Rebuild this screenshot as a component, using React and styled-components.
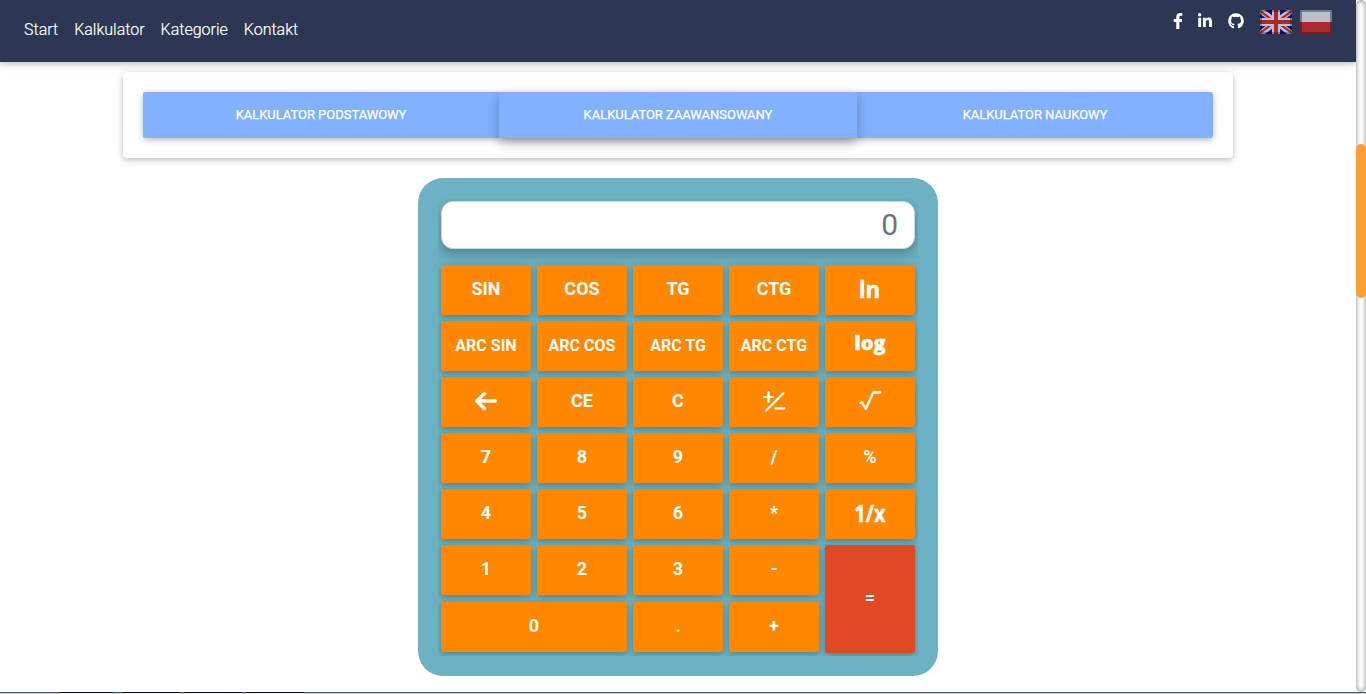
import React from "react";
import styled, { createGlobalStyle, css } from "styled-components";
import { FaFacebookF, FaLinkedinIn, FaGithub } from "react-icons/fa";

const GlobalStyle = createGlobalStyle`
  *, *::before, *::after { box-sizing: border-box; }
  body {
    margin: 0;
    background: #fff;
    font-family: Roboto, "Liberation Sans", sans-serif;
    font-size: 16px;
    overflow: hidden;
  }
`;

const Screen = styled.div`
  display: flex;
  flex-direction: column;
  width: 1366px;
  height: 694px;
  overflow: hidden;
`;

const Viewport = styled.div`
  display: flex;
  height: 692px;
`;

const Page = styled.div`
  width: 1356px;
  height: 692px;
  overflow: hidden;
`;

const Navbar = styled.nav`
  position: relative;
  z-index: 1;
  display: flex;
  justify-content: space-between;
  align-items: flex-start;
  height: 62px;
  padding: 0 24px 0 16px;
  background: #2d3753;
  box-shadow: 0 2px 5px 0 rgba(0, 0, 0, 0.16), 0 2px 10px 0 rgba(0, 0, 0, 0.12);
`;

const NavLinks = styled.div`
  display: flex;
  padding-top: 18px;
`;

const NavLink = styled.a`
  padding: 0 8px;
  color: #fff;
  font-weight: 300;
  line-height: 24px;
  -webkit-text-stroke: 0.2px #fff;
`;

const NavTools = styled.div`
  display: flex;
  align-items: flex-start;
  padding-top: 10px;
`;

const Social = styled.a`
  display: flex;
  margin-right: ${(p) => p.$gap}px;
  padding-top: 3px;
  color: #fff;
`;

const Flag = styled.svg`
  display: block;
  width: 32px;
  height: 24px;
  margin-left: ${(p) => p.$offset || 0}px;
`;

const TabCard = styled.section`
  width: 1110px;
  height: 86px;
  margin: 10px auto 0;
  padding: 20px;
  border-radius: 4px;
  background: #fff;
  box-shadow: 0 2px 5px 0 rgba(0, 0, 0, 0.16), 0 2px 10px 0 rgba(0, 0, 0, 0.12);
`;

const TabGroup = styled.div`
  display: grid;
  grid-template-columns: 356px 358px 356px;
  height: 46px;
  border-radius: 2px;
  box-shadow: 0 2px 5px 0 rgba(0, 0, 0, 0.16), 0 2px 10px 0 rgba(0, 0, 0, 0.12);
`;

const Tab = styled.button`
  border: 0;
  border-radius: ${(p) => p.$radius || 0};
  padding: 0 0 1px;
  background: #82b1ff;
  color: #fff;
  font: 400 12.96px Roboto, "Liberation Sans", sans-serif;
  -webkit-text-stroke: 0.25px #fff;
  text-transform: uppercase;
  ${(p) =>
    p.$active &&
    css`
      z-index: 1;
      box-shadow: 0 5px 11px -1px rgba(0, 0, 0, 0.24), 0 4px 12px 0 rgba(0, 0, 0, 0.09);
    `}
`;

const Calculator = styled.main`
  width: 520px;
  height: 498px;
  margin: 20px auto 0;
  padding: 20px;
  border-radius: 25px;
  background: #6cb2c2;
`;

const Panel = styled.div`
  height: 458px;
  padding: 3px 3px 0;
  overflow: hidden;
`;

const Display = styled.div`
  height: 48px;
  margin-bottom: 16px;
  padding-right: 16px;
  border: 1px solid #ced4da;
  border-radius: 12px;
  background: #fff;
  box-shadow: 0 6px 11px 0 rgba(0, 0, 0, 0.16), 0 5px 14px 0 rgba(0, 0, 0, 0.1);
  color: #6c757d;
  font-size: 30px;
  line-height: 46px;
  text-align: right;
`;

const Keys = styled.div`
  display: grid;
  grid-template-columns: repeat(5, 90px);
  grid-template-rows: repeat(6, 50px) 51px;
  gap: 6px;
`;

const Key = styled.button`
  display: flex;
  align-items: center;
  justify-content: center;
  grid-column: span ${(p) => p.$cols || 1};
  grid-row: span ${(p) => p.$rows || 1};
  height: ${(p) => (p.$rows ? 108 : 50)}px;
  margin-top: ${(p) => p.$drop || 0}px;
  padding: 0 0 ${(p) => p.$lift ?? 4}px;
  border: 0;
  border-radius: 2px;
  background: ${(p) => (p.$rows ? "#e04926" : "#ff8800")};
  color: #fff;
  font: 700 ${(p) => p.$size || 18}px Roboto, "Liberation Sans", sans-serif;
  white-space: nowrap;
  box-shadow: 0 2px 5px 0 rgba(0, 0, 0, 0.16), 0 2px 10px 0 rgba(0, 0, 0, 0.12);
`;

const Symbol = styled.span`
  font: ${(p) => p.$weight || 700} ${(p) => p.$size}px "Open Sans", "Noto Sans", sans-serif;
  -webkit-text-stroke: 0.4px #fff;
  transform: scaleX(${(p) => p.$stretch || 1});
`;

const Glyph = styled.svg`
  display: block;
  fill: none;
  stroke: #fff;
  stroke-linecap: round;
  stroke-linejoin: round;
`;

const ScrollTrack = styled.div`
  width: 10px;
  height: 692px;
  padding-top: 144px;
  border-radius: 10px;
  background: #fff;
  box-shadow: inset 0 0 5px grey;
`;

const ScrollThumb = styled.div`
  height: 154px;
  border-radius: 10px;
  background: #fb9e33;
`;

const Taskbar = styled.footer`
  display: flex;
  height: 2px;
  padding-left: 60px;
  border-top: 1px solid #475465;
  background: #c5d5e5;
`;

const TaskItem = styled.div`
  width: ${(p) => p.$width}px;
  height: 2px;
  margin: -1px ${(p) => p.$gap}px 0 0;
  border-top: 1px solid #090d14;
  background: #eef2f7;
`;

const UkFlag = () => (
  <Flag viewBox="0 0 32 24">
    <clipPath id="uk"><rect width="32" height="24" rx="1.5" /></clipPath>
    <g clipPath="url(#uk)">
      <rect width="32" height="24" fill="#11118c" />
      <path d="M0 0 32 24M32 0 0 24" stroke="#bcc2cd" strokeWidth="5.8" />
      <path d="M0 1 13 10.5M19 13.5 32 23M32 1 19 10.5M13 13.5 0 23" stroke="#ad2a2c" strokeWidth="2.2" />
      <path d="M16 0V24M0 12H32" stroke="#bcc2cd" strokeWidth="8" />
      <path d="M16 0V24M0 12H32" stroke="#ad2a2c" strokeWidth="4" />
      <rect x="1" y="1" width="30" height="22" fill="none" stroke="#000" strokeOpacity=".3" strokeWidth="2" />
    </g>
  </Flag>
);

const PlFlag = () => (
  <Flag viewBox="0 0 32 24" $offset={8}>
    <clipPath id="pl"><rect width="32" height="24" rx="1.5" /></clipPath>
    <g clipPath="url(#pl)">
      <path fill="#717c8c" d="M0 0H32V12H0z" />
      <path fill="#7c1820" d="M0 12H32V24H0z" />
      <path fill="#b9c1cc" d="M2 2H30V12H2z" />
      <path fill="#a92b2c" d="M2 12H30V22H2z" />
    </g>
  </Flag>
);

const ArrowGlyph = () => (
  <Glyph width="24" height="20" viewBox="0 0 24 20" strokeWidth="3.4">
    <path d="M10.5 2.6 2.8 10l7.7 7.4M3 10h18.4" />
  </Glyph>
);

const SignGlyph = () => (
  <Glyph width="24" height="24" viewBox="0 0 24 24" strokeWidth="2.2">
    <path d="M2 8h9M6.5 3.3v9.4M4.2 21.5 21.4 4.3M13.3 19.4h9" />
  </Glyph>
);

const RootGlyph = () => (
  <Glyph width="24" height="22" viewBox="0 0 24 22" strokeWidth="2.3">
    <path d="m2.3 13 1.4-.8 4.2 6.6 7.4-16.3h6.9" />
  </Glyph>
);

const keys = [
  { label: "SIN" }, { label: "COS" }, { label: "TG" }, { label: "CTG" },
  { label: <Symbol $size={24} $stretch={0.93}>ln</Symbol>, lift: 3 },
  { label: "ARC SIN", size: 16, lift: 1 }, { label: "ARC COS", size: 16, lift: 1 },
  { label: "ARC TG", size: 16, lift: 1 }, { label: "ARC CTG", size: 16, lift: 1 },
  { label: <Symbol $size={20} $weight={800}>log</Symbol>, lift: 7 },
  { label: <ArrowGlyph />, lift: 2 }, { label: "CE" }, { label: "C" },
  { label: <SignGlyph />, lift: 2 }, { label: <RootGlyph />, lift: 2 },
  { label: "7" }, { label: "8" }, { label: "9" }, { label: "/" }, { label: "%" },
  { label: "4" }, { label: "5" }, { label: "6" }, { label: "*" },
  { label: <Symbol $size={23} $stretch={0.87}>1/x</Symbol>, lift: 2 },
  { label: "1" }, { label: "2" }, { label: "3" }, { label: "-" },
  { label: "=", rows: 2 },
  { label: "0", cols: 2, drop: 1 }, { label: ".", drop: 1 }, { label: "+", drop: 1 },
];

export default function App() {
  return (
    <Screen>
      <GlobalStyle />
      <Viewport>
        <Page>
          <Navbar>
            <NavLinks>
              {["Start", "Kalkulator", "Kategorie", "Kontakt"].map((t) => (
                <NavLink key={t}>{t}</NavLink>
              ))}
            </NavLinks>
            <NavTools>
              <Social $gap={11}><FaFacebookF size={16} /></Social>
              <Social $gap={15}><FaLinkedinIn size={16} /></Social>
              <Social $gap={16}><FaGithub size={16} /></Social>
              <UkFlag />
              <PlFlag />
            </NavTools>
          </Navbar>
          <TabCard>
            <TabGroup>
              <Tab $radius="2px 0 0 2px">Kalkulator podstawowy</Tab>
              <Tab $active>Kalkulator zaawansowany</Tab>
              <Tab $radius="0 2px 2px 0">Kalkulator naukowy</Tab>
            </TabGroup>
          </TabCard>
          <Calculator>
            <Panel>
              <Display>0</Display>
              <Keys>
                {keys.map((k, i) => (
                  <Key
                    key={i}
                    $cols={k.cols}
                    $rows={k.rows}
                    $size={k.size}
                    $lift={k.lift}
                    $drop={k.drop}
                  >
                    {k.label}
                  </Key>
                ))}
              </Keys>
            </Panel>
          </Calculator>
        </Page>
        <ScrollTrack>
          <ScrollThumb />
        </ScrollTrack>
      </Viewport>
      <Taskbar>
        <TaskItem $width={53} $gap={9} />
        <TaskItem $width={58} $gap={4} />
        <TaskItem $width={58} $gap={4} />
        <TaskItem $width={58} $gap={0} />
      </Taskbar>
    </Screen>
  );
}
